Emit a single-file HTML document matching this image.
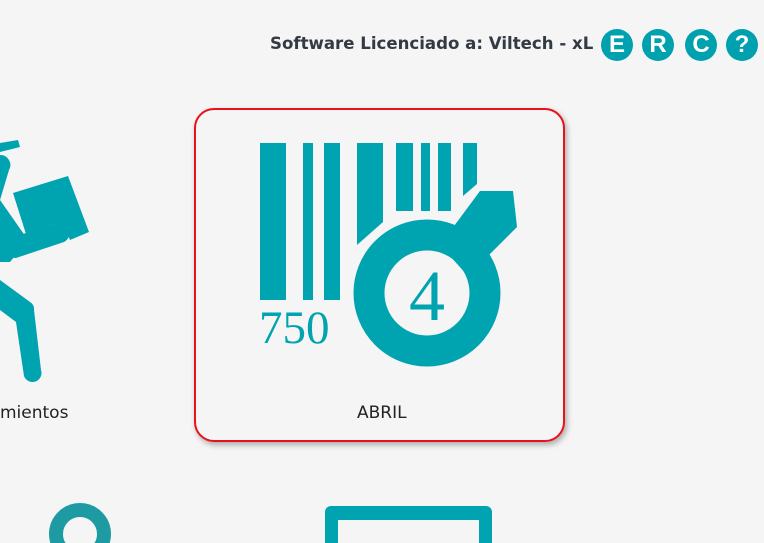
<!DOCTYPE html>
<html><head><meta charset="utf-8"><style>
html,body{margin:0;padding:0;background:#f5f5f5;width:764px;height:543px;overflow:hidden;position:relative;font-family:"DejaVu Sans","Liberation Sans",sans-serif}
.hdr{position:absolute;left:270px;top:34px;font-weight:bold;font-size:16.6px;color:#333a44;white-space:nowrap}
.b{position:absolute;top:29px;width:32px;height:32px;border-radius:50%;background:#00a1ae;color:#fff;font:bold 24px "Liberation Sans",sans-serif;text-align:center;line-height:32px}
.card{position:absolute;left:194px;top:108px;width:367px;height:330px;border:2px solid #e8121a;border-radius:20px;box-shadow:2px 3px 6px rgba(0,0,0,.3);background:#f5f5f5}
.lbl{position:absolute;font-size:17px;color:#222}
</style></head><body>
<div class="hdr">Software Licenciado a: Viltech - xL</div>
<div class="b" style="left:601px">E</div>
<div class="b" style="left:642px">R</div>
<div class="b" style="left:685px">C</div>
<div class="b" style="left:726px">?</div>

<svg style="position:absolute;left:0;top:0" width="764" height="543">
 <g fill="#00a3b0">
  <path d="M0 143 L18 140 L20 147 L0 152Z"/>
  <path d="M0 155 A10 10 0 0 1 9 170 L0 200Z"/>
  <path d="M13 193 L68 176 L89 232 L70 240 L64 226 A8 8 0 0 0 55 224 L26 234Z"/>
  <path d="M0 200 L28 240 L10 262 L0 262Z"/>
  <path d="M10 238 L55 224 A9 9 0 0 1 64 242 L16 258 A9 9 0 0 1 7 246Z"/>
  <path d="M0 280 L30 302 A8 8 0 0 1 34 310 L41 370 A7 7 0 0 1 24 376 L16 322 L0 310Z"/>
 </g>
 <circle cx="80" cy="534" r="24" fill="none" stroke="#1e9aa3" stroke-width="14"/>
 <path d="M325 543 L325 512 A6 6 0 0 1 331 506 L486 506 A6 6 0 0 1 492 512 L492 543 L479 543 L479 520 L338 520 L338 543Z" fill="#00a3b0"/>
</svg>
<div class="card"></div>
<svg style="position:absolute;left:0;top:0" width="764" height="543">
 <g fill="#00a3b0">
  <rect x="260" y="143" width="26" height="157"/>
  <rect x="303" y="143" width="10" height="157"/>
  <rect x="324" y="143" width="16" height="157"/>
  <path d="M357 143 H383 V222 L357 245Z"/>
  <rect x="396" y="143" width="17" height="68"/>
  <rect x="421" y="143" width="9" height="68"/>
  <rect x="438" y="143" width="13" height="68"/>
  <path d="M463 143 H477 V184 L463 196Z"/>
  <circle cx="427" cy="293" r="79" fill="#f5f5f5"/>
  <path d="M480 191 L513 191 L517 227 L468 276 L440 245 Z"/>
  <circle cx="427" cy="293" r="58" fill="none" stroke="#00a3b0" stroke-width="31"/>
 </g>
 <text x="259" y="343" font-family="Liberation Serif,serif" font-size="47" fill="#00a3b0">750</text>
 <text x="427" y="320" text-anchor="middle" font-family="Liberation Serif,serif" font-size="72" fill="#00a3b0">4</text>
</svg>
<div class="lbl" style="left:357px;top:403px">ABRIL</div>
<div class="lbl" style="left:0px;top:403px">mientos</div>
</body></html>
